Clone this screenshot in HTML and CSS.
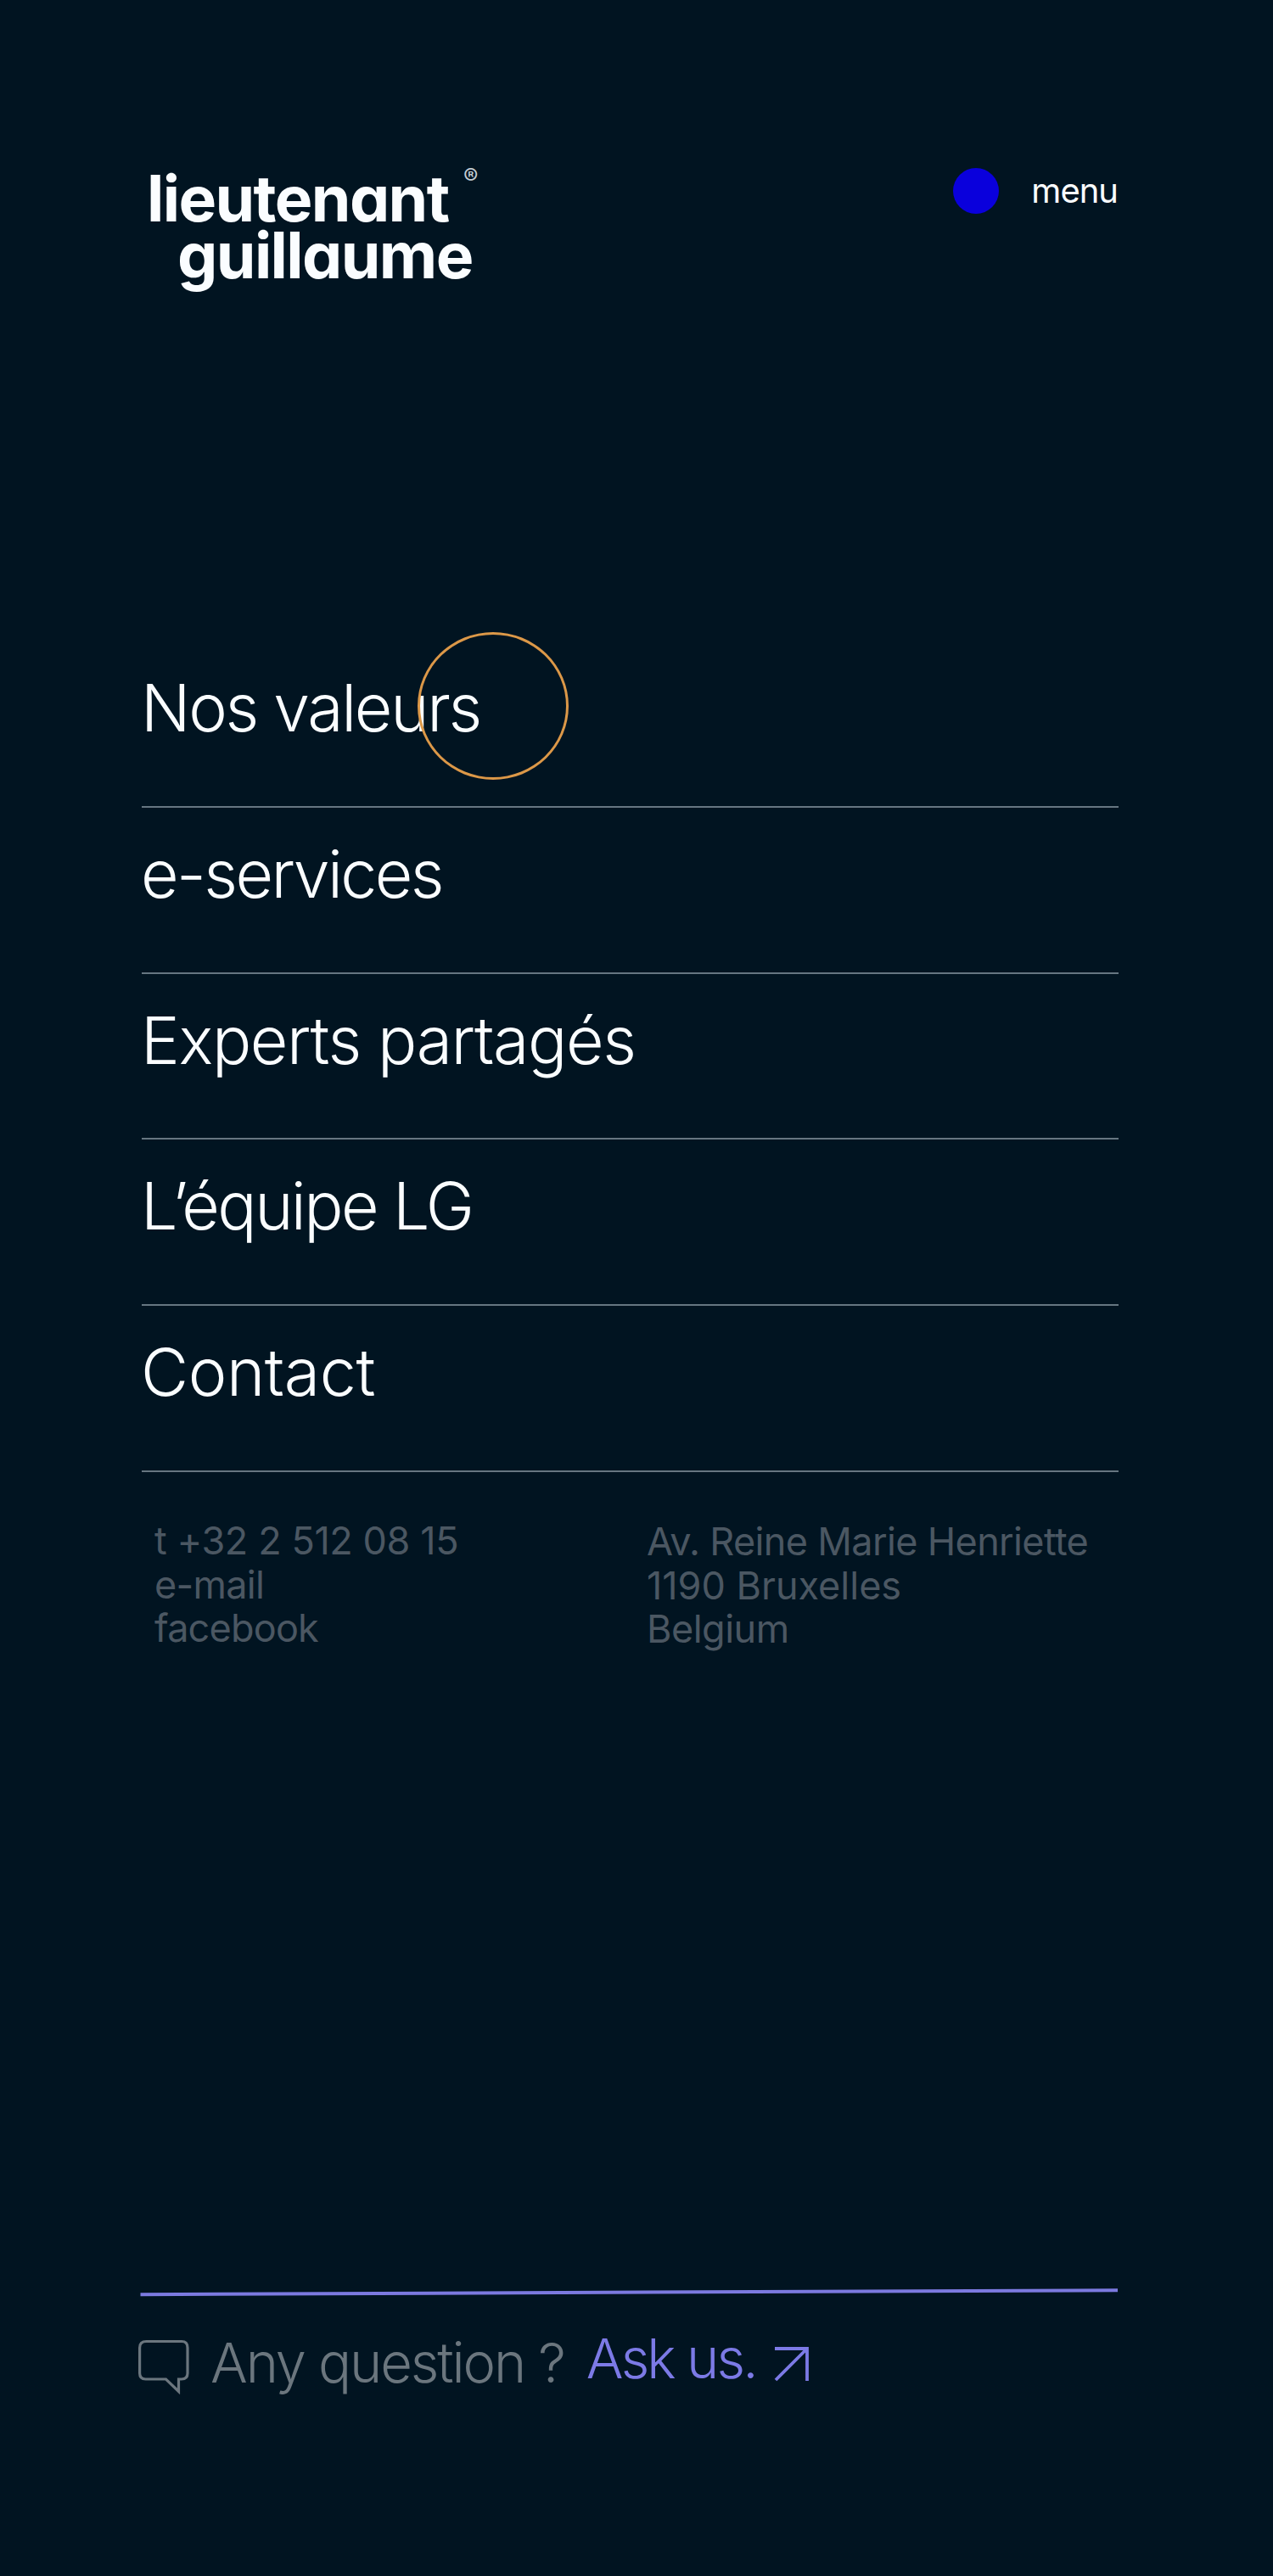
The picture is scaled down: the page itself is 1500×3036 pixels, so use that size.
FILE: index.html
```html
<!DOCTYPE html>
<html lang="fr">
<head>
    <meta charset="UTF-8">
    <meta name="viewport" content="width=device-width, initial-scale=1.0">
    <title>lieutenant guillaume</title>
    <link rel="stylesheet" href="styles.css">
</head>
<body>
    <header class="header">
        <a href="#" class="logo">
            <span class="logo_top">lieutenant</span>
            <span class="logo_bottom">guillaume</span>
            <span class="logo_reg">®</span>
        </a>
        <a href="#" class="menu_btn"><i class="dot"></i><span>menu</span></a>
    </header>
    <nav class="nav">
        <ul>
            <li><a href="#" class="valeurs">Nos valeurs</a><i class="cursor"></i></li>
            <li><a href="#" class="services">e-services</a></li>
            <li><a href="#" class="experts">Experts partagés</a></li>
            <li><a href="#" class="equipe">L’équipe LG</a></li>
            <li><a href="#" class="contact">Contact</a></li>
        </ul>
    </nav>
    <div class="infos">
        <div class="infos_left">
            <p class="tel">t +32 2 512 08 15</p>
            <p class="mail">e-mail</p>
            <p class="fb">facebook</p>
        </div>
        <div class="infos_right">
            <p class="street">Av. Reine Marie Henriette</p>
            <p class="city">1190 Bruxelles</p>
            <p class="country">Belgium</p>
        </div>
    </div>
    <footer class="footer">
        <svg class="rule" width="1154" height="10" viewBox="0 0 1154 10">
            <path d="M1.5 7.2L1153 2.2" stroke="#7c7ae0" stroke-width="4"/>
        </svg>
        <div class="ask">
            <svg class="bubble" width="62" height="66" viewBox="0 0 62 66" fill="none" stroke="#6b767e" stroke-width="3.2">
                <path d="M9.500 2.500H51Q58 2.500 58 10V40Q58 47 51 47H47.500V61.500L32.500 47H8.500Q1.600 47 1.600 40V10Q1.600 2.500 9.500 2.500Z"/>
            </svg>
            <span class="question">Any question ?</span>
            <a href="#" class="ask_link">Ask us.</a>
            <svg class="arrow" width="42" height="44" viewBox="0 0 42 44" fill="none" stroke="#7c7ae6" stroke-width="3.800">
                <path d="M1 4H39V42M38 5L2 41"/>
            </svg>
        </div>
    </footer>
</body>
</html>
```
FILE: styles.css
```css
*{margin:0; padding:0; box-sizing:border-box;}
li{list-style:none;}
a{text-decoration:none; color:inherit;}
svg{display:block; flex:none;}
body{width:1500px; height:3036px; background:#011421; color:#fafdff; font-family:Inter,"Liberation Sans",sans-serif; white-space:nowrap; overflow:hidden;}

.header{display:flex; justify-content:space-between; align-items:flex-start; width:1150px; height:556px; margin-left:167px; padding-top:197px;}
.logo{position:relative; padding:3px 0 0 6px; font-size:75px; font-weight:650; line-height:67px; font-feature-settings:"cv11";}
.logo span{display:block;}
.logo_top{letter-spacing:-1.600px;}
.logo_bottom{padding-left:36px; letter-spacing:-1.600px;}
.logo .logo_reg{position:absolute; left:379px; top:-2px; font-size:26px; font-weight:400; line-height:26px; color:#c3ccd3;}
.menu_btn{display:flex; align-items:center; font-size:40px; line-height:54px; letter-spacing:-1px;}
.menu_btn span{padding:1px 0 0 38px;}
.dot{width:54px; height:54px; border-radius:50%; background:#0a00dc;}

.nav{width:1151px; margin:200px 0 0 167px; font-weight:300;}
.nav li{position:relative; height:195.750px; padding-top:28px; border-bottom:2px solid #667681; font-size:77px; line-height:100px;}
.nav a{display:inline-block; margin-left:-1px;}
.cursor{position:absolute; left:325px; top:-11px; width:178px; height:174px; border:3px solid #dc9848; border-radius:50%;}
.valeurs{letter-spacing:-2.300px;}
.services{letter-spacing:-2.600px;}
.experts{letter-spacing:-1.400px;}
.equipe{letter-spacing:-2.600px;}
.contact{letter-spacing:-.4px;}

.infos{display:flex; height:200px; padding:55px 0 0 182px; font-size:45px; line-height:51.800px; color:#4b5762;}
.infos_left{width:580px;}
.infos_right{padding-top:1px;}
.tel{letter-spacing:-.4px;}
.mail{letter-spacing:-.7px;}
.fb{letter-spacing:-.8px;}
.street{letter-spacing:-.650px;}
.country{letter-spacing:-.5px;}

.footer{margin:762px 0 0 163px;}
.rule{margin-left:1px;}
.ask{display:flex; align-items:flex-start; padding-top:50px;}
.question{margin-top:-2px; padding-left:23px; font-size:65px; font-weight:320; line-height:60px; letter-spacing:-2.100px; color:#6b767e;}
.ask_link{margin-top:-7px; padding-left:26px; font-size:65px; font-weight:320; line-height:60px; letter-spacing:-2.900px; color:#7c7ae6;}
.arrow{margin:7px 0 0 21px;}
```
